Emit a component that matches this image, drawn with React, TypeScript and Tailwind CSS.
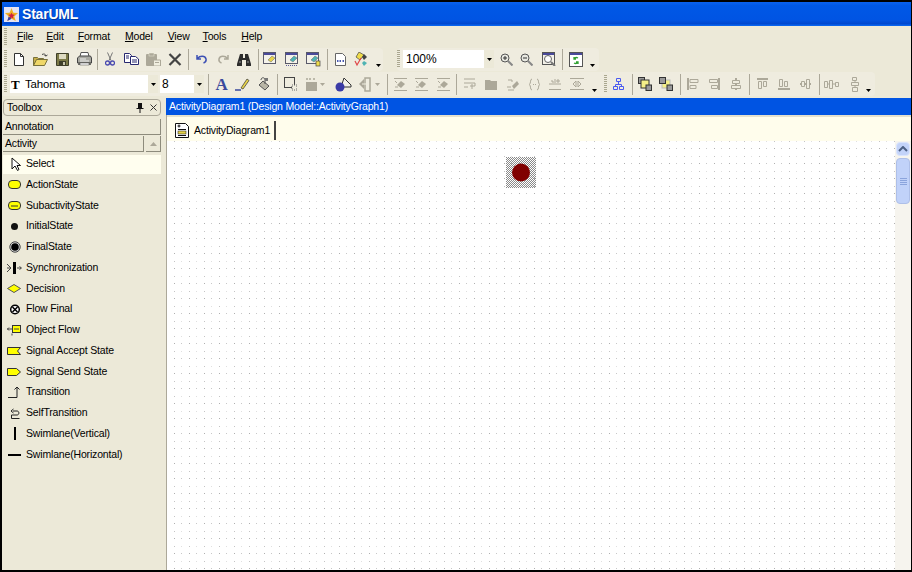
import React from 'react';

const GREY = '#aca899';

interface IcoProps {
  w: number;
  h: number;
  className?: string;
  children: React.ReactNode;
}
function Ico({ w, h, className = '', children }: IcoProps) {
  return (
    <svg width={w} height={h} viewBox={`0 0 ${w} ${h}`} className={`shrink-0 ${className}`}>
      {children}
    </svg>
  );
}

function Grip({ className = '' }: { className?: string }) {
  return (
    <div
      className={`w-[3px] h-[18px] shrink-0 bg-[repeating-linear-gradient(to_bottom,#aaa78f_0_1px,transparent_1px_2px)] ${className}`}
    />
  );
}

function Sep({ className = '' }: { className?: string }) {
  return <div className={`w-px h-[21px] shrink-0 bg-[#aca899] ${className}`} />;
}

function More({ className = '' }: { className?: string }) {
  return (
    <Ico w={5} h={3} className={`self-end mb-[4px] ${className}`}>
      <path d="M0 0h5L2.5 3z" fill="#000" />
    </Ico>
  );
}

function ComboArrow() {
  return (
    <div className="w-[10px] self-stretch bg-[#ece9d8] flex items-center justify-center">
      <svg width="5" height="3" viewBox="0 0 5 3">
        <path d="M0 0h5L2.5 3z" fill="#000" />
      </svg>
    </div>
  );
}

function WinIcon({ className = '', accent, extra }: { className?: string; accent: string; extra?: React.ReactNode }) {
  return (
    <Ico w={15} h={16} className={className}>
      <rect x="0.5" y="1.5" width="12" height="11" fill="#f4f2ea" stroke="#5a5a6a" />
      <rect x="1" y="2" width="11" height="2" fill="#4a4a9a" />
      <path d="M5 9l4-4 3 2-4 4z" fill={accent} stroke="#666" strokeWidth="0.5" />
      {extra}
    </Ico>
  );
}

function Toolbar1() {
  return (
    <div className="h-[24px] flex items-center">
      <div className="flex items-center h-[23px] w-[381px] rounded-r bg-[#efecdf]">
        <Grip className="ml-[2px]" />
        <Ico w={10} h={13} className="ml-[7px]">
          <path d="M.5.5h6l3 3v9H.5z" fill="#fff" stroke="#333" />
          <path d="M6.5.5v3h3" fill="none" stroke="#333" />
        </Ico>
        <Ico w={15} h={13} className="ml-[9px]">
          <path d="M.5 4.5h4l1 1h5v2h-7l-3 5z" fill="#c9b04a" stroke="#77703a" />
          <path d="M.5 12.5l3-6h11l-3 6z" fill="#efd768" stroke="#77703a" />
          <path d="M9 1.5c2-1 3.500-.5 4 1.500M13 3l1.500-1M13 3l-1.500-.5" fill="none" stroke="#444" />
        </Ico>
        <Ico w={13} h={13} className="ml-[8px]">
          <path d="M.5.5h12v12H.5z" fill="#7c7a48" stroke="#3f3f2a" />
          <rect x="3" y="1" width="7" height="5" fill="#dedbc2" />
          <rect x="3" y="8" width="7" height="4" fill="#3f3f2a" />
          <rect x="7" y="9" width="2" height="3" fill="#c9c6ad" />
        </Ico>
        <Ico w={15} h={14} className="ml-[8px]">
          <path d="M4 .5h7l1 4H3z" fill="#fff" stroke="#555" />
          <path d="M.5 6l2-2h11l1 2v5h-14z" fill="#a9a9a2" stroke="#444" />
          <rect x="1" y="10" width="13" height="3" fill="#6d6d68" />
          <path d="M3 7h6M3 9h9" stroke="#eee" />
          <rect x="3" y="11" width="9" height="2" fill="#fff" stroke="#444" strokeWidth="0.5" />
        </Ico>
        <Sep className="ml-[5px]" />
        <Ico w={10} h={14} className="ml-[7px]">
          <path d="M2.500.5l3.500 8M7.500.5L4 8.500" stroke="#777" fill="none" />
          <circle cx="2.500" cy="11" r="2" fill="none" stroke="#4a4ab0" strokeWidth="1.300" />
          <circle cx="7.500" cy="11" r="2" fill="none" stroke="#4a4ab0" strokeWidth="1.300" />
        </Ico>
        <Ico w={15} h={12} className="ml-[9px]">
          <path d="M.5.5h5l2 2v7h-7z" fill="#fff" stroke="#27276f" />
          <path d="M6.500 3.500h5l3 2.500v5.500h-8z" fill="#fff" stroke="#27276f" />
          <path d="M2 3h3M2 5h3M8 7h5M8 9h5" stroke="#27276f" />
        </Ico>
        <Ico w={15} h={13} className="ml-[7px]">
          <rect x="0" y="1" width="11" height="12" rx="1" fill={GREY} />
          <rect x="3" y="0" width="5" height="3" fill={GREY} stroke="#ece9d8" strokeWidth="0.5" />
          <path d="M7.500 7h7v6h-7z" fill="#f0eee0" stroke={GREY} />
          <path d="M9 9.500h4" stroke={GREY} />
        </Ico>
        <Ico w={14} h={13} className="ml-[7px]">
          <path d="M1.500 1l11 11M12.500 1l-11 11" stroke="#444" strokeWidth="2.200" />
        </Ico>
        <Sep className="ml-[6px]" />
        <Ico w={11} h={10} className="ml-[7px]">
          <path d="M1 1v4h4M1.500 4.500C4 1.500 9 1.500 10 5c.4 2-1 3.500-2.500 4" fill="none" stroke="#3c50b4" strokeWidth="1.500" />
        </Ico>
        <Ico w={12} h={10} className="ml-[10px]">
          <path d="M11 1v4H7M10.500 4.500C8 1.500 3 1.500 2 5c-.4 2 1 3.500 2.500 4" fill="none" stroke={GREY} strokeWidth="1.500" />
        </Ico>
        <Ico w={14} h={13} className="ml-[8px]">
          <path d="M3 1h3v4h2V1h3l3 10v2H9V7H5v6H0v-2z" fill="#2c2c2c" />
          <path d="M2 9h2M10 9h2" stroke="#9a9a9a" />
        </Ico>
        <Sep className="ml-[7px]" />
        <WinIcon className="ml-[4px]" accent="#e8d44a" />
        <WinIcon className="ml-[7px]" accent="#4fb3b3" extra={<path d="M1 14.500h12" stroke="#5a5a9a" strokeDasharray="1 1" />} />
        <WinIcon className="ml-[6px]" accent="#4fb3b3" extra={<rect x="10" y="10" width="4" height="5" fill="#efdc4a" stroke="#444" strokeWidth="0.7" />} />
        <Sep className="ml-[6px]" />
        <Ico w={11} h={13} className="ml-[7px]">
          <path d="M.5.5h7l3 3v9H.5z" fill="#fff" stroke="#666" />
          <path d="M2 8h1.500M4.500 8H6M7.500 8H9" stroke="#4a5ab0" strokeWidth="2" />
        </Ico>
        <Ico w={15} h={15} className="ml-[8px]">
          <path d="M5 0l5 3-4 5-4-3z" fill="#efdc4a" stroke="#444" strokeWidth="0.7" />
          <path d="M1 9l2 4 4-7" fill="none" stroke="#e0484a" strokeWidth="1.200" />
          <path d="M10 2l3 3-3 3-2-3z" fill="#444" />
          <path d="M10 9l3 2-3 3-2-3z" fill="#4fb3b3" />
        </Ico>
        <More className="ml-[7px]" />
      </div>
      <div className="flex items-center h-[23px] w-[202px] ml-[14px] rounded bg-[#efecdf]">
        <Grip />
        <div className="ml-[3px] h-[18px] w-[91px] bg-white flex items-center pl-[3px] text-[12px] tracking-normal">
          <span className="flex-1">100%</span>
          <ComboArrow />
        </div>
        <Ico w={13} h={13} className="ml-[6px]">
          <circle cx="5" cy="5" r="4" fill="#e8e8e0" stroke="#555" />
          <path d="M3 5h4M5 3v4" stroke="#333" />
          <path d="M8 8l4.500 4.500" stroke="#888" strokeWidth="2" />
        </Ico>
        <Ico w={13} h={13} className="ml-[7px]">
          <circle cx="5" cy="5" r="4" fill="#e8e8e0" stroke="#555" />
          <path d="M3 5h4" stroke="#333" />
          <path d="M8 8l4.500 4.500" stroke="#888" strokeWidth="2" />
        </Ico>
        <Ico w={14} h={14} className="ml-[9px]">
          <rect x="0.5" y="0.500" width="12" height="12" fill="#f4f2ea" stroke="#555" />
          <rect x="1" y="1" width="11" height="2" fill="#4a4a9a" />
          <circle cx="6" cy="7" r="3.500" fill="#fff" stroke="#666" />
          <path d="M9 10l4 4" stroke="#777" strokeWidth="2" />
        </Ico>
        <Sep className="ml-[6px]" />
        <Ico w={14} h={15} className="ml-[6px]">
          <rect x="0.500" y="0.500" width="13" height="14" fill="#fff" stroke="#555" />
          <rect x="1" y="1" width="12" height="2" fill="#4a4a9a" />
          <path d="M9 6a3 3 0 0 0-4 1M5 5v2h2M5 11a3 3 0 0 0 4-1M9 12v-2H7" fill="none" stroke="#2ea02e" strokeWidth="1.300" />
        </Ico>
        <More className="ml-[7px]" />
      </div>
    </div>
  );
}

function Toolbar2() {
  return (
    <div className="h-[26px] flex items-center">
      <div className="flex items-center h-[24px] w-[873px] rounded-r bg-[#efecdf]">
        <Grip className="ml-[2px]" />
        <div className="ml-[3px] h-[18px] w-[148px] bg-white flex items-center text-[11.5px]">
          <span className="ml-px w-[14px] font-['Liberation_Serif',serif] font-bold text-[13px] leading-none">T</span>
          <span className="flex-1 pt-px">Tahoma</span>
          <ComboArrow />
        </div>
        <div className="ml-[2px] h-[18px] w-[44px] bg-white flex items-center pl-[2px] text-[12px]">
          <span className="flex-1">8</span>
          <ComboArrow />
        </div>
        <Sep className="ml-[4px]" />
        <span className="ml-[6px] w-[13px] text-center font-['Liberation_Serif',serif] font-bold text-[17px] leading-none text-[#3a4a9c]">
          A
        </span>
        <Ico w={15} h={13} className="ml-[7px]">
          <path d="M6 10l6-9 2 1.500L8 11z" fill="#e8d44a" stroke="#333" strokeWidth="0.7" />
          <path d="M0 12h6" stroke="#3a4a9c" strokeWidth="1.500" />
        </Ico>
        <Ico w={12} h={14} className="ml-[8px]">
          <path d="M5 4l6 5-4 4-6-5z" fill="#b9b6a6" stroke="#555" />
          <path d="M3 3c0-3 4-3 4 0v4" fill="none" stroke="#555" />
          <rect x="7" y="1" width="3" height="3" fill="#777" />
        </Ico>
        <Sep className="ml-[7px]" />
        <Ico w={13} h={14} className="ml-[6px]">
          <rect x="0.500" y="0.500" width="10" height="10" fill="none" stroke="#444" />
          <rect x="8" y="8" width="5" height="5" fill="#f0eee0" stroke="#666" strokeDasharray="1 1" />
        </Ico>
        <Ico w={20} h={14} className="ml-[8px]">
          <rect x="1" y="5" width="11" height="9" fill={GREY} />
          <path d="M2 1v2M5 1v2M9 1v2" stroke={GREY} strokeWidth="1.500" />
          <path d="M15 6h5l-2.500 3z" fill={GREY} />
        </Ico>
        <Ico w={17} h={15} className="ml-[10px]">
          <path d="M9 1l7 7v2H6z" fill="#f4f2ea" stroke="#333" />
          <circle cx="5" cy="10" r="4.500" fill="#3b3ba6" />
        </Ico>
        <Ico w={22} h={15} className="ml-[6px]">
          <path d="M1 7l5-5v10z" fill={GREY} />
          <path d="M7 1h5v13H7z" fill="none" stroke={GREY} strokeWidth="1.500" />
          <path d="M4 7h5" stroke="#f0eee0" />
          <path d="M17 6h5l-2.500 3z" fill={GREY} />
        </Ico>
        <Sep className="ml-[7px]" />
        {[0, 1, 2].map((i) => (
          <Ico key={i} w={13} h={13} className={i === 0 ? 'ml-[6px]' : i === 1 ? 'ml-[8px]' : 'ml-[9px]'}>
            <path d="M0 .5h13M0 12.500h13" stroke={GREY} />
            <path d="M3 7l4-4 4 3-4 4z" fill={GREY} />
            <path d="M1 3l2 2M1 9h3" stroke={GREY} />
          </Ico>
        ))}
        <Sep className="ml-[6px]" />
        <Ico w={12} h={12} className="ml-[7px]">
          <path d="M0 1h11M0 5h11v3H6M0 9h4M8 6v5" fill="none" stroke={GREY} />
        </Ico>
        <Ico w={12} h={11} className="ml-[9px]">
          <path d="M0 1h5l1 1h6v9H0z" fill={GREY} />
        </Ico>
        <Ico w={13} h={13} className="ml-[9px]">
          <path d="M6 8l5-5 2 3-5 5z" fill={GREY} />
          <path d="M1 9h4M2 12h6M2 2h4v2" fill="none" stroke={GREY} />
        </Ico>
        <Ico w={11} h={13} className="ml-[10px]">
          <path d="M3 1C1 1 2 5 0.500 6.500 2 8 1 12 3 12M8 1c2 0 1 4 2.500 5.500C9 8 10 12 8 12" fill="none" stroke={GREY} />
          <path d="M4 6.500h3" stroke={GREY} strokeDasharray="1 1" />
        </Ico>
        <Ico w={12} h={12} className="ml-[9px]">
          <path d="M0 6h12M0 11.500h12M2 3h2v2M6 1v4M9 1v4M7 3h4" fill="none" stroke={GREY} />
        </Ico>
        <Ico w={14} h={12} className="ml-[9px]">
          <path d="M0 .5h14M0 11.500h14M3 6l3-3v6zM11 6L8 3v6z" fill="none" stroke={GREY} />
        </Ico>
        <More className="ml-[8px]" />
        <Grip className="ml-[7px]" />
        <Ico w={11} h={12} className="ml-[6px]">
          <path d="M3.500.5h4v3h-4zM.5 8.500h4v3h-4zM6.500 8.500h4v3h-4zM5.500 3.500v3M2.500 8.500v-2h6v2" fill="none" stroke="#4a5af0" />
        </Ico>
        <Sep className="ml-[8px]" />
        <Ico w={14} h={14} className="ml-[5px]">
          <rect x="0.500" y="0.500" width="6" height="6" fill="#999" stroke="#333" />
          <rect x="3" y="3" width="8" height="8" fill="#f5f088" stroke="#333" />
          <rect x="8" y="8" width="5.500" height="5.500" fill="#999" stroke="#333" />
        </Ico>
        <Ico w={14} h={14} className="ml-[7px]">
          <rect x="3" y="3" width="8" height="8" fill="#f5f088" stroke="#bbb" />
          <rect x="0.500" y="0.500" width="6" height="6" fill="#999" stroke="#333" />
          <rect x="8" y="8" width="5.500" height="5.500" fill="#999" stroke="#333" />
        </Ico>
        <Sep className="ml-[7px]" />
        <Ico w={12} h={12} className="ml-[6px]">
          <path d="M0 0h2v12H0z" fill={GREY} />
          <path d="M3 1.500h8v3H3zM3 7.500h6v3H3z" fill="none" stroke={GREY} />
        </Ico>
        <Ico w={11} h={12} className="ml-[10px]">
          <path d="M9 0h2v12H9z" fill={GREY} />
          <path d="M0.500 1.500h8v3h-8zM2.500 7.500h6v3h-6z" fill="none" stroke={GREY} />
        </Ico>
        <Ico w={10} h={12} className="ml-[11px]">
          <path d="M4 0h2v12H4z" fill={GREY} />
          <path d="M1.500 2.500h7v3h-7zM.5 7.500h9v3h-9z" fill="#efecdf" stroke={GREY} />
        </Ico>
        <Sep className="ml-[8px]" />
        <Ico w={11} h={12} className="ml-[7px]">
          <path d="M0 0h11v2H0z" fill={GREY} />
          <path d="M1.500 3.500h3v7h-3zM6.500 3.500h3v5h-3z" fill="none" stroke={GREY} />
        </Ico>
        <Ico w={12} h={12} className="ml-[10px]">
          <path d="M0 10h12v2H0z" fill={GREY} />
          <path d="M1.500 1.500h3v7h-3zM6.500 3.500h3v5h-3z" fill="none" stroke={GREY} />
        </Ico>
        <Ico w={11} h={10} className="ml-[10px]">
          <path d="M0 4h11v2H0z" fill={GREY} />
          <path d="M1.500 2.500h3v5h-3zM6.500.5h3v9h-3z" fill="#efecdf" stroke={GREY} />
        </Ico>
        <Sep className="ml-[8px]" />
        <Ico w={15} h={9} className="ml-[4px]">
          <path d="M.5 1.500h3v6h-3zM5.500.5h3v8h-3zM11.500 2.500h3v4h-3zM3.500 4h2M8.500 4h3" fill="none" stroke={GREY} />
        </Ico>
        <Ico w={8} h={15} className="ml-[12px]">
          <path d="M1.500.5h4v3h-4zM.5 5.500h7v3h-7zM1.500 10.500h5v4h-5zM4 3.500v2M4 8.500v2" fill="none" stroke={GREY} />
        </Ico>
        <More className="ml-[7px]" />
      </div>
    </div>
  );
}

const MENU = [
  { label: 'File', cls: 'ml-[10px]' },
  { label: 'Edit', cls: 'ml-[13px]' },
  { label: 'Format', cls: 'ml-[14px]' },
  { label: 'Model', cls: 'ml-[15px]' },
  { label: 'View', cls: 'ml-[15px]' },
  { label: 'Tools', cls: 'ml-[13px]' },
  { label: 'Help', cls: 'ml-[15px]' },
];

const TOOLS: { label: string; icon: React.ReactNode }[] = [
  {
    label: 'ActionState',
    icon: (
      <Ico w={13} h={9}>
        <rect x="0.500" y="0.500" width="12" height="8" rx="3.500" fill="#ffff00" stroke="#333" />
      </Ico>
    ),
  },
  {
    label: 'SubactivityState',
    icon: (
      <Ico w={13} h={9}>
        <rect x="0.500" y="0.500" width="12" height="8" rx="3.500" fill="#ffff00" stroke="#333" />
        <path d="M3 5h7" stroke="#333" />
      </Ico>
    ),
  },
  {
    label: 'InitialState',
    icon: (
      <Ico w={13} h={9}>
        <circle cx="6.500" cy="4.500" r="3.500" fill="#111" />
      </Ico>
    ),
  },
  {
    label: 'FinalState',
    icon: (
      <Ico w={13} h={12}>
        <circle cx="7" cy="6" r="5.200" fill="#ddd" stroke="#444" />
        <circle cx="7" cy="6" r="3.800" fill="#000" />
      </Ico>
    ),
  },
  {
    label: 'Synchronization',
    icon: (
      <Ico w={15} h={12} className="-ml-px">
        <rect x="6" y="0" width="3" height="12" fill="#000" />
        <path d="M0 2l4 4-4 4M0 6h4M10 6h4M12.500 4.500L14.500 6l-2 1.500" fill="none" stroke="#444" />
      </Ico>
    ),
  },
  {
    label: 'Decision',
    icon: (
      <Ico w={14} h={9} className="-ml-px">
        <path d="M.5 4.500L7 .5l6.500 4L7 8.500z" fill="#ffff00" stroke="#555" />
      </Ico>
    ),
  },
  {
    label: 'Flow Final',
    icon: (
      <Ico w={13} h={11}>
        <circle cx="7" cy="5.500" r="4.300" fill="#fff" stroke="#000" strokeWidth="1.500" />
        <path d="M4.500 3l5 5M9.500 3l-5 5" stroke="#000" strokeWidth="1.500" />
      </Ico>
    ),
  },
  {
    label: 'Object Flow',
    icon: (
      <Ico w={14} h={11} className="-ml-px">
        <rect x="5.500" y="0.500" width="8" height="7" fill="#ffff00" stroke="#333" />
        <path d="M0 4h5M2 2.500L0.500 4 2 5.500M7 4h5M5 8.500v2" fill="none" stroke="#444" />
      </Ico>
    ),
  },
  {
    label: 'Signal Accept State',
    icon: (
      <Ico w={14} h={8} className="-ml-px">
        <path d="M.5.500h13l-3 3.500 3 3.500H.5z" fill="#ffff00" stroke="#333" />
      </Ico>
    ),
  },
  {
    label: 'Signal Send State',
    icon: (
      <Ico w={14} h={8} className="-ml-px">
        <path d="M.5.500h9l4 3.500-4 3.500h-9z" fill="#ffff00" stroke="#333" />
      </Ico>
    ),
  },
  {
    label: 'Transition',
    icon: (
      <Ico w={12} h={12}>
        <path d="M0 11.500h9V1M6.500 3.500L9 1l2.500 2.500" fill="none" stroke="#222" />
      </Ico>
    ),
  },
  {
    label: 'SelfTransition',
    icon: (
      <Ico w={10} h={11} className="ml-[2px]">
        <path d="M3 3h4c2.500 0 2.500 4 0 4H1.500v3.500h8M3.500 1L1 3l2.500 2" fill="none" stroke="#222" />
      </Ico>
    ),
  },
  {
    label: 'Swimlane(Vertical)',
    icon: (
      <Ico w={13} h={13}>
        <rect x="6" y="0" width="2" height="13" fill="#000" />
      </Ico>
    ),
  },
  {
    label: 'Swimlane(Horizontal)',
    icon: (
      <Ico w={13} h={2}>
        <rect x="0" y="0" width="13" height="2" fill="#000" />
      </Ico>
    ),
  },
];

function Toolbox() {
  return (
    <aside className="w-[164px] shrink-0 bg-[#ece9d8] pt-px flex flex-col">
      <div className="ml-px w-[158px] h-[17px] rounded-sm border border-[#aca899] flex items-center pl-[3px] pr-[3px]">
        <span className="flex-1">Toolbox</span>
        <svg width="8" height="10" viewBox="0 0 8 10" className="mr-[6px]">
          <path d="M2 0h4v5h1.500v1h-3v4h-1V6h-3V5H2z" fill="#111" />
        </svg>
        <svg width="7" height="7" viewBox="0 0 7 7">
          <path d="M.5.5l6 6M6.500.5l-6 6" stroke="#333" />
        </svg>
      </div>
      <div className="mt-[3px] ml-px w-[158px] h-[16px] bg-[#ece9d8] border-r border-b border-[#8d8b7c] flex items-center pl-[2px]">
        Annotation
      </div>
      <div className="mt-px ml-px flex h-[16px]">
        <div className="w-[141px] border-r border-b border-[#8d8b7c] flex items-center pl-[2px]">Activity</div>
        <div className="ml-[2px] w-[15px] border-r border-b border-[#8d8b7c] flex items-center justify-center">
          <svg width="7" height="4" viewBox="0 0 7 4">
            <path d="M3.500 0L7 4H0z" fill="#aca899" />
          </svg>
        </div>
      </div>
      <div className="mt-[3px] ml-px w-[158px] h-[19px] bg-[#fffeef] flex items-center pb-px">
        <Ico w={10} h={14} className="ml-[8px]">
          <path d="M1 1v11l3-3 2.500 4.500L8 12.500 6 8.500h3.500z" fill="#fff" stroke="#111" />
        </Ico>
        <span className="ml-[5px]">Select</span>
      </div>
      <div className="pt-[0.4px]">
        {TOOLS.map((tool) => (
          <div key={tool.label} className="h-[20.75px] flex items-center pl-[6px]">
            <div className="w-[18px] flex items-center">{tool.icon}</div>
            <span>{tool.label}</span>
          </div>
        ))}
      </div>
    </aside>
  );
}

function Canvas() {
  return (
    <div className="relative flex-1 min-w-0 overflow-hidden bg-white">
      {/* dot grid of the diagram */}
      <svg width="100%" height="100%" className="absolute inset-0">
        <defs>
          <pattern id="grid" width="15" height="15" patternUnits="userSpaceOnUse">
            <rect x="7" y="0" width="1" height="1" fill="#c4c4c4" />
            <rect x="14" y="0" width="1" height="1" fill="#e0e0e0" />
            <rect x="7" y="7" width="1" height="1" fill="#b0b0b0" />
            <rect x="14" y="7" width="1" height="1" fill="#c8c8c8" />
          </pattern>
        </defs>
        <rect width="100%" height="100%" fill="url(#grid)" />
      </svg>
      <svg width="30" height="31" viewBox="0 0 30 31" className="absolute left-[339px] top-[16px]">
        <defs>
          <pattern id="handle" width="2" height="2" patternUnits="userSpaceOnUse">
            <rect width="1" height="1" fill="#8a8a8a" />
            <rect x="1" y="1" width="1" height="1" fill="#8a8a8a" />
          </pattern>
        </defs>
        <rect width="30" height="31" fill="url(#handle)" />
        <circle cx="15" cy="15.500" r="9" fill="#800000" />
      </svg>
    </div>
  );
}

function Scrollbar() {
  return (
    <div className="w-[16px] shrink-0 bg-[#f6f4ee] pt-px pl-px">
      <div className="w-[14px] h-[14px] rounded-sm bg-[#c3d3f9] border border-[#dbe5fd] flex items-center justify-center">
        <svg width="10" height="6" viewBox="0 0 10 6">
          <path d="M1 5l4-4 4 4" fill="none" stroke="#4d6185" strokeWidth="2" />
        </svg>
      </div>
      <div className="mt-[2px] w-[14px] h-[46px] rounded-sm bg-[#c1d2f9] border border-[#aebfe8] flex flex-col items-center justify-center gap-px">
        {[0, 1, 2, 3].map((i) => (
          <div key={i} className="w-[7px] h-px bg-[#8ba4dc]" />
        ))}
      </div>
    </div>
  );
}

export default function App() {
  return (
    <div className="w-[912px] h-[572px] overflow-hidden bg-black pt-[2px] pl-[2px] pr-px pb-[2px] flex flex-col font-['Liberation_Sans',Arial,sans-serif] text-[10.5px] tracking-[-0.17px] text-black">
      <header className="h-[24px] shrink-0 flex items-center pl-[2px] bg-[linear-gradient(to_bottom,#0a62ee_0%,#0058e6_15%,#0054e3_75%,#0048cf_90%,#0a6af5_100%)]">
        <svg width="15" height="15" viewBox="0 0 16 16">
          <rect width="16" height="16" fill="#e4e4f4" />
          <path d="M8 1l2 5 5 .5-4 3.500 1.500 5L8 12.500 3.500 15 5 10 1 6.500 6 6z" fill="#f0b020" />
          <path d="M8 6l1 2 2.500.3-2 1.700.7 2.500L8 11.200 5.800 12.500l.7-2.500-2-1.700L7 8z" fill="#d02040" />
          <path d="M3.500 15L5 10l3 2.500z" fill="#3a3ab0" />
        </svg>
        <span className="ml-[3px] text-[14px] tracking-[-0.2px] font-bold text-white [text-shadow:1px_1px_#0038a0]">StarUML</span>
      </header>
      <div className="h-[21px] shrink-0 bg-[#ece9d8] flex items-center">
        <Grip className="ml-[2px] h-[14px]" />
        {MENU.map((m) => (
          <span key={m.label} className={m.cls}>
            <span className="underline">{m.label[0]}</span>
            {m.label.slice(1)}
          </span>
        ))}
      </div>
      <div className="shrink-0 bg-[#ece9d8]">
        <Toolbar1 />
        <Toolbar2 />
      </div>
      <div className="flex-1 min-h-0 flex bg-[#ece9d8] pt-px">
        <Toolbox />
        <main className="flex-1 min-w-0 flex flex-col">
          <div className="h-[17px] shrink-0 bg-[#0054e3] text-white flex items-center pl-[3px]">
            ActivityDiagram1 (Design Model::ActivityGraph1)
          </div>
          <div className="flex-1 min-h-0 flex flex-col border-l border-[#aca899]">
            <div className="h-[26px] shrink-0 bg-[#fffdec] border-t-2 border-[#e4e1cf] flex items-end pl-[5px]">
              <div className="h-[19px] mb-px w-[104px] border-r-2 border-[#444] flex items-center pl-[3px]">
                <svg width="14" height="15" viewBox="0 0 14 15">
                  <path d="M.5.5h10l3 3v11H.5z" fill="#fff" stroke="#111" />
                  <path d="M3 6.500h8M3 12.500h8" stroke="#111" />
                  <rect x="3" y="8" width="8" height="3" fill="#e8d44a" stroke="#111" strokeWidth="0.5" />
                  <path d="M4 1.500v3M2.500 3h3" stroke="#111" />
                </svg>
                <span className="ml-[5px]">ActivityDiagram1</span>
              </div>
            </div>
            <div className="flex-1 min-h-0 flex">
              <Canvas />
              <Scrollbar />
            </div>
          </div>
        </main>
      </div>
    </div>
  );
}
